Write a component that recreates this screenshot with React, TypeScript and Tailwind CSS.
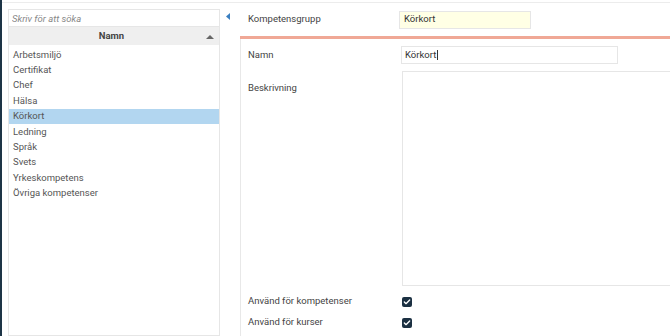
import { Check } from "lucide-react";

const groups = [
  "Arbetsmiljö",
  "Certifikat",
  "Chef",
  "Hälsa",
  "Körkort",
  "Ledning",
  "Språk",
  "Svets",
  "Yrkeskompetens",
  "Övriga kompetenser",
];

function Checkbox() {
  return (
    <span className="flex h-[10px] w-[10px] items-center justify-center rounded-[2px] bg-[#1b3042]">
      <Check className="h-[8px] w-[8px] text-white" strokeWidth={4} />
    </span>
  );
}

export default function App() {
  return (
    <div className="flex h-[336px] w-[670px] flex-col overflow-hidden border-l-2 border-[#1d3446] bg-white font-['Roboto',sans-serif] text-[9.5px] text-[#444]">
      <div className="mt-[2px] border-t border-[#ececec]" />
      <div className="flex flex-1">
        {/* Left: list of groups */}
        <div className="flex w-[218px] shrink-0 flex-col pl-[6px] pt-[6px]">
          <input
            placeholder="Skriv för att söka"
            className="h-[18px] w-full border border-[#e6e6e6] px-[3px] text-[9.5px] italic text-[#555] outline-none placeholder:text-[#888]"
          />
          <div className="flex flex-1 flex-col border border-t-0 border-[#e6e6e6]">
            <div className="flex h-[18px] items-center bg-[#efefef] pl-[8px] pr-[4px]">
              <span className="flex-1 text-center font-bold text-[#444]">Namn</span>
              <svg width="8" height="5" viewBox="0 0 8 5" className="mr-[1px]">
                <path d="M0 5 L4 1 L8 5 Z" fill="#666" />
              </svg>
            </div>
            <ul className="pt-[2px]">
              {groups.map((g) => (
                <li
                  key={g}
                  className={`flex h-[15.4px] items-center px-[4px] text-[#555] ${
                    g === "Körkort" ? "bg-[#b2d6f0]" : ""
                  }`}
                >
                  {g}
                </li>
              ))}
            </ul>
          </div>
        </div>

        {/* Collapse toggle */}
        <div className="w-[20px] shrink-0 pl-[6px] pt-[10px]">
          <svg width="4" height="7" viewBox="0 0 4 7">
            <path d="M4 0 L0 3.5 L4 7 Z" fill="#3a7fc1" />
          </svg>
        </div>

        {/* Right: details form */}
        <div className="flex flex-1 flex-col">
          <div className="flex h-[33px] items-center pl-[8px]">
            <span className="w-[151px]">Kompetensgrupp</span>
            <div className="flex h-[18px] w-[132px] items-center border border-[#e6e6e6] bg-[#ffffe5] px-[4px] text-[#333]">
              Körkort
            </div>
          </div>
          <div className="h-[3px] bg-[#f0a896]" />
          <div className="flex flex-1 flex-col border-l border-[#e8e8e8] pl-[7px] pt-[7px]">
            <div className="flex h-[18px] items-center">
              <span className="w-[153px]">Namn</span>
              <div className="flex h-[18px] w-[217px] items-center border border-[#e6e6e6] px-[3px] text-[#333]">
                Körkort<span className="ml-px h-[10px] w-px bg-[#333]" />
              </div>
            </div>
            <div className="mt-[7px] flex h-[215px]">
              <span className="w-[154px] pt-[10px]">Beskrivning</span>
              <div className="flex-1 border border-r-0 border-[#e6e6e6]" />
            </div>
            <div className="mt-[10px] flex h-[11px] items-center">
              <span className="w-[154px]">Använd för kompetenser</span>
              <Checkbox />
            </div>
            <div className="mt-[10px] flex h-[11px] items-center">
              <span className="w-[154px]">Använd för kurser</span>
              <Checkbox />
            </div>
          </div>
        </div>
      </div>
    </div>
  );
}
